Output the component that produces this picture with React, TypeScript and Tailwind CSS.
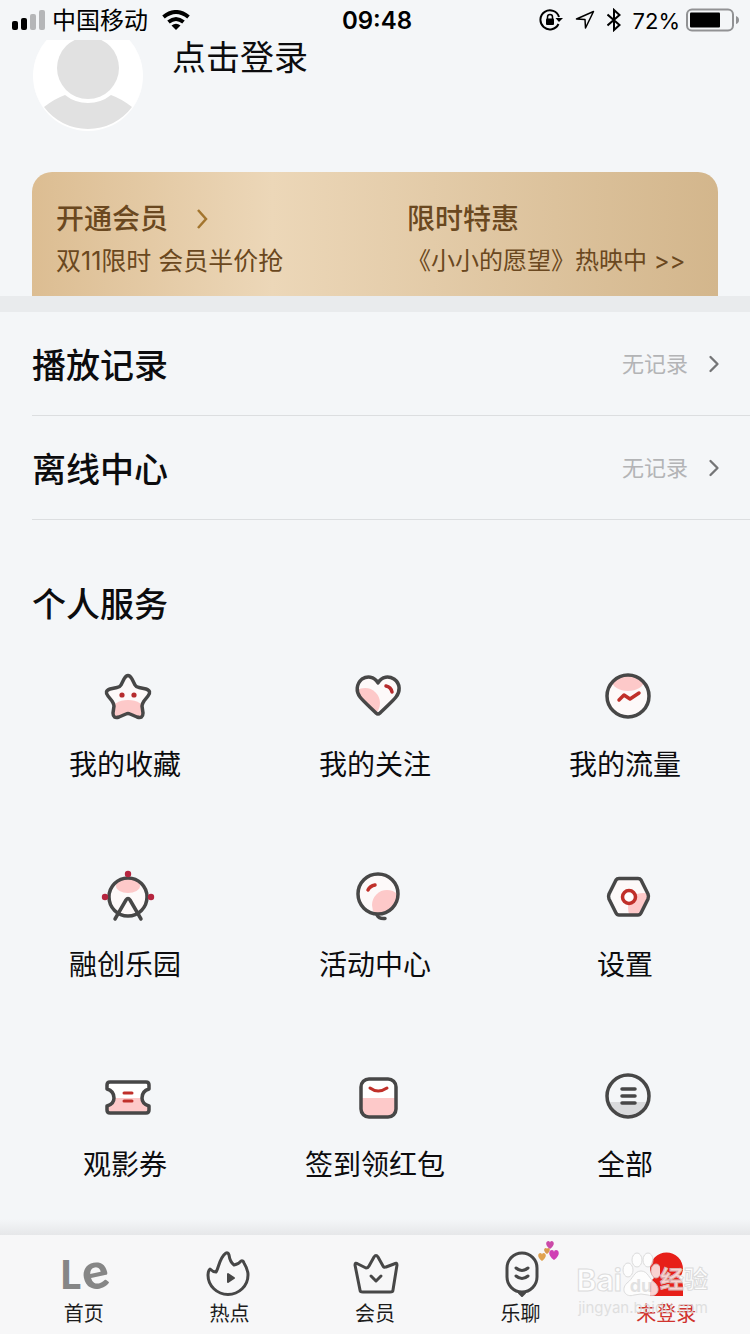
import type { ReactNode } from 'react';
import { ChevronRight } from 'lucide-react';

interface Service {
  name: string;
  icon: ReactNode;
}

interface Tab {
  name: string;
  icon: ReactNode;
  active?: boolean;
}

const STAR = 'M29 12Q33 5 37 12L40 18Q41 20 44 20.500L51 22Q57 24 53 29L49 34Q47 37 47 39L48 46Q48 52 42 50L35 47Q33 46 31 47L24 50Q18 52 18 46L19 39Q19 37 17 34L13 29Q9 24 15 22L22 20.500Q25 20 26 18Z';
const HEART = 'M33 16C29 9 22 9 17 12C11 17 11 25 15 30C18 34 27 42 31 46Q33 48 35 46C39 42 48 34 51 30C55 25 56 17 49 12C44 9 37 9 33 16Z';
const HEXAGON = 'M24 11.500H43Q45 11.500 46 13L53 27Q54 29.500 53 32L46 46Q45 48 43 48H24Q22 48 21 46L14 32Q13 29.500 14 27L21 13Q22 11.500 24 11.500Z';
const TICKET = 'M15 15H51Q54 15 54 18V22Q47 24 47 31Q47 37 54 39V43Q54 46 51 46H15Q12 46 12 43V39Q19 37 19 31Q19 24 12 22V18Q12 15 15 15Z';
const SMALL_HEART = 'M0 5C-7 0 -5 -5 -2 -5Q0 -5 0 -3Q0 -5 2 -5C5 -5 7 0 0 5Z';

function ServiceIcon({ children }: { children: ReactNode }) {
  return (
    <svg width="60" height="60" viewBox="0 0 60 60" fill="none" stroke="#474747" strokeWidth="3.500" strokeLinecap="round" strokeLinejoin="round" aria-hidden="true">
      {children}
    </svg>
  );
}

function TabIcon({ children }: { children: ReactNode }) {
  return (
    <svg width="48" height="48" viewBox="0 0 48 48" fill="none" stroke="#474747" strokeWidth="3" strokeLinecap="round" strokeLinejoin="round" aria-hidden="true">
      {children}
    </svg>
  );
}

const services: Service[] = [
  {
    name: '我的收藏',
    icon: (
      <ServiceIcon>
        <clipPath id="star"><path d={STAR} /></clipPath>
        <path d={STAR} fill="#fdf9f9" stroke="none" />
        <ellipse cx="33" cy="44" rx="17" ry="11" fill="#fdc9c9" stroke="none" clipPath="url(#star)" />
        <path d={STAR} />
        <g fill="#b62b2d" stroke="none">
          <circle cx="27" cy="28" r="2.600" />
          <circle cx="39" cy="28" r="2.600" />
        </g>
      </ServiceIcon>
    ),
  },
  {
    name: '我的关注',
    icon: (
      <ServiceIcon>
        <clipPath id="heart"><path d={HEART} /></clipPath>
        <path d={HEART} fill="#fdf9f9" stroke="none" />
        <circle cx="20" cy="36" r="15" fill="#fdc9c9" stroke="none" clipPath="url(#heart)" />
        <path d={HEART} />
        <path d="M41 19Q46 20 47 25" stroke="#b62b2d" />
      </ServiceIcon>
    ),
  },
  {
    name: '我的流量',
    icon: (
      <ServiceIcon>
        <clipPath id="flow"><circle cx="33" cy="29" r="21" /></clipPath>
        <circle cx="33" cy="29" r="21" fill="#fdf9f9" stroke="none" />
        <ellipse cx="33" cy="14" rx="16" ry="10" fill="#fdc9c9" stroke="none" clipPath="url(#flow)" />
        <circle cx="33" cy="29" r="21" />
        <path d="M24 33L29 28L35 32L44 26" stroke="#c0302a" />
      </ServiceIcon>
    ),
  },
  {
    name: '融创乐园',
    icon: (
      <ServiceIcon>
        <circle cx="33" cy="30" r="19" fill="#fdf9f9" stroke="none" />
        <ellipse cx="33" cy="19" rx="12" ry="7" fill="#fdc9c9" stroke="none" />
        <circle cx="33" cy="30" r="19" />
        <path d="M20 52L31 33Q33 30 35 33L46 52" />
        <g fill="#b5253f" stroke="none">
          <circle cx="33" cy="7" r="3.200" />
          <circle cx="10" cy="30" r="3.200" />
          <circle cx="56" cy="30" r="3.200" />
        </g>
      </ServiceIcon>
    ),
  },
  {
    name: '活动中心',
    icon: (
      <ServiceIcon>
        <clipPath id="balloon"><circle cx="33" cy="27" r="20" /></clipPath>
        <circle cx="33" cy="27" r="20" fill="#fdf9f9" stroke="none" />
        <circle cx="42" cy="38" r="15" fill="#fdc9c9" stroke="none" clipPath="url(#balloon)" />
        <circle cx="33" cy="27" r="20" />
        <path d="M32 48Q34 52 40 51.500" />
        <path d="M23 23Q25 19 30 18" stroke="#c0302a" />
      </ServiceIcon>
    ),
  },
  {
    name: '设置',
    icon: (
      <ServiceIcon>
        <clipPath id="hexagon"><path d={HEXAGON} /></clipPath>
        <path d={HEXAGON} fill="#fdf9f9" stroke="none" />
        <circle cx="48" cy="41" r="15" fill="#fdc9c9" stroke="none" clipPath="url(#hexagon)" />
        <path d={HEXAGON} />
        <circle cx="34" cy="30" r="6.500" fill="#fff" stroke="#c0302a" />
      </ServiceIcon>
    ),
  },
  {
    name: '观影券',
    icon: (
      <ServiceIcon>
        <clipPath id="ticket"><path d={TICKET} /></clipPath>
        <path d={TICKET} fill="#fff" stroke="none" />
        <path d="M8 31H58V50H8Z" fill="#fdc9c9" stroke="none" clipPath="url(#ticket)" />
        <path d={TICKET} />
        <path d="M29 26H37M29 34H37" stroke="#c0302a" strokeWidth="3" />
      </ServiceIcon>
    ),
  },
  {
    name: '签到领红包',
    icon: (
      <ServiceIcon>
        <rect x="16" y="12" width="35" height="38" rx="8" fill="#fff" stroke="none" />
        <path d="M16 31H51V42Q51 50 43 50H24Q16 50 16 42Z" fill="#fdc9c9" stroke="none" />
        <rect x="16" y="12" width="35" height="38" rx="8" />
        <path d="M25 21Q33 27 42 21" stroke="#c0302a" strokeWidth="3" />
      </ServiceIcon>
    ),
  },
  {
    name: '全部',
    icon: (
      <ServiceIcon>
        <path d="M13 35H53A21 21 0 0 1 13 35Z" fill="#d9dadc" stroke="none" />
        <circle cx="33" cy="29" r="21" />
        <path d="M27 22H40M27 29H40M27 36H40" />
      </ServiceIcon>
    ),
  },
];

const tabs: Tab[] = [
  {
    name: '首页',
    icon: (
      <span className="flex h-12 items-baseline font-['Lato'] font-black text-[#868686]">
        <span className="text-[40px] leading-[42px]">L</span>
        <span className="-rotate-12 text-[50px] leading-[42px]">e</span>
      </span>
    ),
  },
  {
    name: '热点',
    icon: (
      <TabIcon>
        <path d="M5 20Q8 23 11 23C14 19 14 9 21 4Q23 3 24 6Q25 13 29 16Q34 15 36 12Q38 11 39 14C42 19 43 22 43 26A20 19.500 0 0 1 3 26Q3 22 5 20Z" />
        <path d="M23 25V33L29 29Z" fill="#474747" strokeWidth="2" />
      </TabIcon>
    ),
  },
  {
    name: '会员',
    icon: (
      <TabIcon>
        <path d="M4 16Q4 13 7 15L15 19Q17 19 18 17L23 8Q25 5 27 8L32 17Q33 19 35 18L43 15Q46 13 46 16L42 41Q42 43 39 43H12Q9 43 9 41Z" />
        <path d="M20 27L25 32L30 27" />
      </TabIcon>
    ),
  },
  {
    name: '乐聊',
    icon: (
      <div className="relative">
        <TabIcon>
          <rect x="10" y="4" width="30" height="39" rx="15" />
          <path d="M22 44L25 47L28 44Z" fill="#474747" strokeWidth="2" />
          <path d="M19 19Q25 24 31 19M19 27Q25 32 31 27" />
        </TabIcon>
        <svg width="24" height="24" viewBox="0 0 24 24" className="absolute -top-2.5 left-10" aria-hidden="true">
          <path d={SMALL_HEART} fill="#cb4aa8" transform="translate(13 6) scale(0.800)" />
          <path d={SMALL_HEART} fill="#e0a24f" transform="translate(5 18) scale(0.800)" />
          <path d={SMALL_HEART} fill="#d99a4e" transform="translate(10 12) scale(0.600)" />
          <path d={SMALL_HEART} fill="#d03fb4" transform="translate(17 16)" />
        </svg>
      </div>
    ),
  },
  {
    name: '未登录',
    active: true,
    icon: (
      <svg width="48" height="48" viewBox="0 0 48 48" fill="#e71f19" aria-hidden="true">
        <path d="M8 47V38Q8 32 12 29Q8 25 8 20A16.500 16.500 0 0 1 41 20Q41 25 37 29Q41 32 41 38V47Z" />
      </svg>
    ),
  },
];

const records = ['播放记录', '离线中心'];

function StatusBar() {
  return (
    <div className="grid h-10 grid-cols-[1fr_auto_1fr] items-center pr-2 pl-3 text-black">
      <div className="flex items-center">
        <svg width="34" height="20" viewBox="0 0 34 20" aria-hidden="true">
          <rect x="0" y="11" width="6" height="9" rx="2" />
          <rect x="9" y="8" width="6" height="12" rx="2" />
          <rect x="18" y="4" width="6" height="16" rx="2" fill="#b5b6b8" />
          <rect x="27" y="0" width="6" height="20" rx="2" fill="#b5b6b8" />
        </svg>
        <span className="ml-1.5 pt-0.5 text-2xl leading-8">中国移动</span>
        <svg width="28" height="20" viewBox="0 0 28 20" className="ml-3.5" fill="none" stroke="#000" strokeWidth="4" aria-hidden="true">
          <path d="M1.500 7Q14 -3 26.500 7" />
          <path d="M6.500 12Q14 6 21.500 12" />
          <path d="M9.500 15.500Q14 12 18.500 15.500L14 20Z" fill="#000" stroke="none" />
        </svg>
      </div>
      <span className="pt-0.5 text-2xl leading-8 font-semibold">09:48</span>
      <div className="flex items-center justify-end pr-[3px]">
        <svg width="24" height="22" viewBox="0 0 24 22" fill="none" stroke="#000" strokeWidth="2" aria-hidden="true">
          <path d="M19.500 15A9.500 9.500 0 1 1 20 8" />
          <path d="M16.500 9H24L20 13Z" fill="#000" stroke="none" />
          <rect x="7" y="9.500" width="8" height="6.500" rx="1" fill="#000" stroke="none" />
          <path d="M8.500 10V8Q8.500 5.500 11 5.500Q13.500 5.500 13.500 8V10" strokeWidth="1.500" />
        </svg>
        <svg width="20" height="20" viewBox="0 0 20 20" className="ml-3" fill="none" stroke="#000" strokeWidth="1.500" strokeLinejoin="round" aria-hidden="true">
          <path d="M18.500 1.500L10.500 18L10 9.500L1.500 9Z" />
        </svg>
        <svg width="14" height="24" viewBox="0 0 14 24" className="ml-3" fill="none" stroke="#000" strokeWidth="2" aria-hidden="true">
          <path d="M0.500 6.500L12.500 17L7 22V2L12.500 7L0.500 17.500" />
        </svg>
        <span className="ml-3 pt-0.5 text-[22px] leading-8">72%</span>
        <svg width="53" height="24" viewBox="0 0 53 24" className="ml-1.5" aria-hidden="true">
          <rect x="1" y="1.500" width="46" height="21" rx="5" fill="none" stroke="#919294" strokeWidth="2" />
          <rect x="4" y="4.500" width="30" height="15" rx="1" />
          <path d="M50 8Q53 9 53 12Q53 15 50 16Z" fill="#919294" />
        </svg>
      </div>
    </div>
  );
}

function Watermark() {
  return (
    <div className="pointer-events-none absolute right-[42px] bottom-4 opacity-80" aria-hidden="true">
      <div className="flex h-12 items-end text-white">
        <span className="text-[30px] leading-9 font-bold [-webkit-text-stroke:1px_#d6d6d6]">Bai</span>
        <svg width="38" height="46" viewBox="0 0 38 46" fill="#fff" stroke="#d6d6d6">
          <ellipse cx="6" cy="18" rx="5" ry="7" />
          <ellipse cx="15" cy="8" rx="5" ry="7" />
          <ellipse cx="26" cy="8" rx="5" ry="7" />
          <ellipse cx="34" cy="19" rx="5" ry="7" />
          <path d="M19 19C26 19 27 27 33 31C40 38 34 46 26 43Q19 41 12 43C4 46 -2 38 5 31C11 27 12 19 19 19Z" />
          <text x="19" y="40" textAnchor="middle" fontSize="18" fontWeight="700" fill="#dcdcdc" stroke="none">du</text>
        </svg>
        <span className="text-2xl leading-9 font-bold [-webkit-text-stroke:1px_#d6d6d6]">经验</span>
      </div>
      <div className="text-right text-[15px] leading-5 text-[#dadada]">jingyan.baidu.com</div>
    </div>
  );
}

export default function App() {
  return (
    <div className="flex min-h-screen flex-col bg-[#f4f6f8] font-['Inter','Noto_Sans_CJK_SC',sans-serif] text-[#0c0c0e]">
      <StatusBar />

      <header className="px-8 pb-[41px]">
        <button className="flex items-start gap-7">
          <svg width="112" height="91" viewBox="0 0 112 91" aria-hidden="true">
            <circle cx="56" cy="36" r="55" fill="#fff" />
            <circle cx="56" cy="28" r="31" fill="#e1e1e1" />
            <path d="M12 67Q22 59 33 55Q43 63 56 63Q69 63 79 55Q90 59 100 67A55 55 0 0 1 12 67Z" fill="#e1e1e1" />
          </svg>
          <span className="text-[34px] leading-9">点击登录</span>
        </button>
      </header>

      <section className="mx-8 flex rounded-t-[20px] bg-linear-to-r from-[#dcbd92] via-[#ecd7b8] via-35% to-[#d3b68c] px-6 pt-[27px] pb-[19px] text-[#6a4820]">
        <a href="#vip" className="flex-1 whitespace-nowrap">
          <h2 className="flex items-center gap-7 text-[28px] leading-10 font-medium">
            开通会员
            <svg width="12" height="20" viewBox="0 0 12 20" fill="none" stroke="#a3752e" strokeWidth="2.500" aria-hidden="true">
              <path d="M2 1L10 10L2 19" />
            </svg>
          </h2>
          <p className="mt-1.5 text-[25px] leading-8">双11限时 会员半价抢</p>
        </a>
        <a href="#offer" className="w-[45%] whitespace-nowrap">
          <h2 className="text-[28px] leading-10 font-medium">限时特惠</h2>
          <p className="mt-1.5 text-2xl leading-8">《小小的愿望》热映中 &gt;&gt;</p>
        </a>
      </section>
      <div className="h-4 bg-[#e9ebed]" />

      {records.map(name => (
        <a
          key={name}
          href="#records"
          className="ml-8 flex h-26 items-center justify-between border-b border-[#dcdee0] pr-[22px]"
        >
          <span className="pt-1 text-[34px] leading-10 font-medium">{name}</span>
          <span className="flex items-center gap-3 text-[22px] leading-8 text-[#b3b4b6]">
            无记录
            <ChevronRight className="h-7 w-7 text-[#747577]" strokeWidth={2} />
          </span>
        </a>
      ))}

      <main className="pt-[65px]">
        <h1 className="px-8 text-[34px] leading-10 font-medium">个人服务</h1>
        <div className="mt-[42px] grid grid-cols-3 gap-y-[84px]">
          {services.map(service => (
            <button key={service.name} className="flex flex-col items-center gap-5">
              {service.icon}
              <span className="text-[28px] leading-9">{service.name}</span>
            </button>
          ))}
        </div>
      </main>

      <div className="mt-auto pt-9">
        <div className="h-4 bg-linear-to-b from-[#f4f6f8] to-[#e6e7e9]" />
        <nav className="relative flex bg-[#f7f7f8] px-[11px] pt-[14px] pb-2">
          {tabs.map(tab => (
            <a key={tab.name} href="#tab" className="flex flex-1 flex-col items-center gap-[5px]">
              {tab.icon}
              <span className={`text-xl leading-6 ${tab.active ? 'text-[#d0332e]' : 'text-[#1c1c1c]'}`}>
                {tab.name}
              </span>
            </a>
          ))}
          <Watermark />
        </nav>
      </div>
    </div>
  );
}
